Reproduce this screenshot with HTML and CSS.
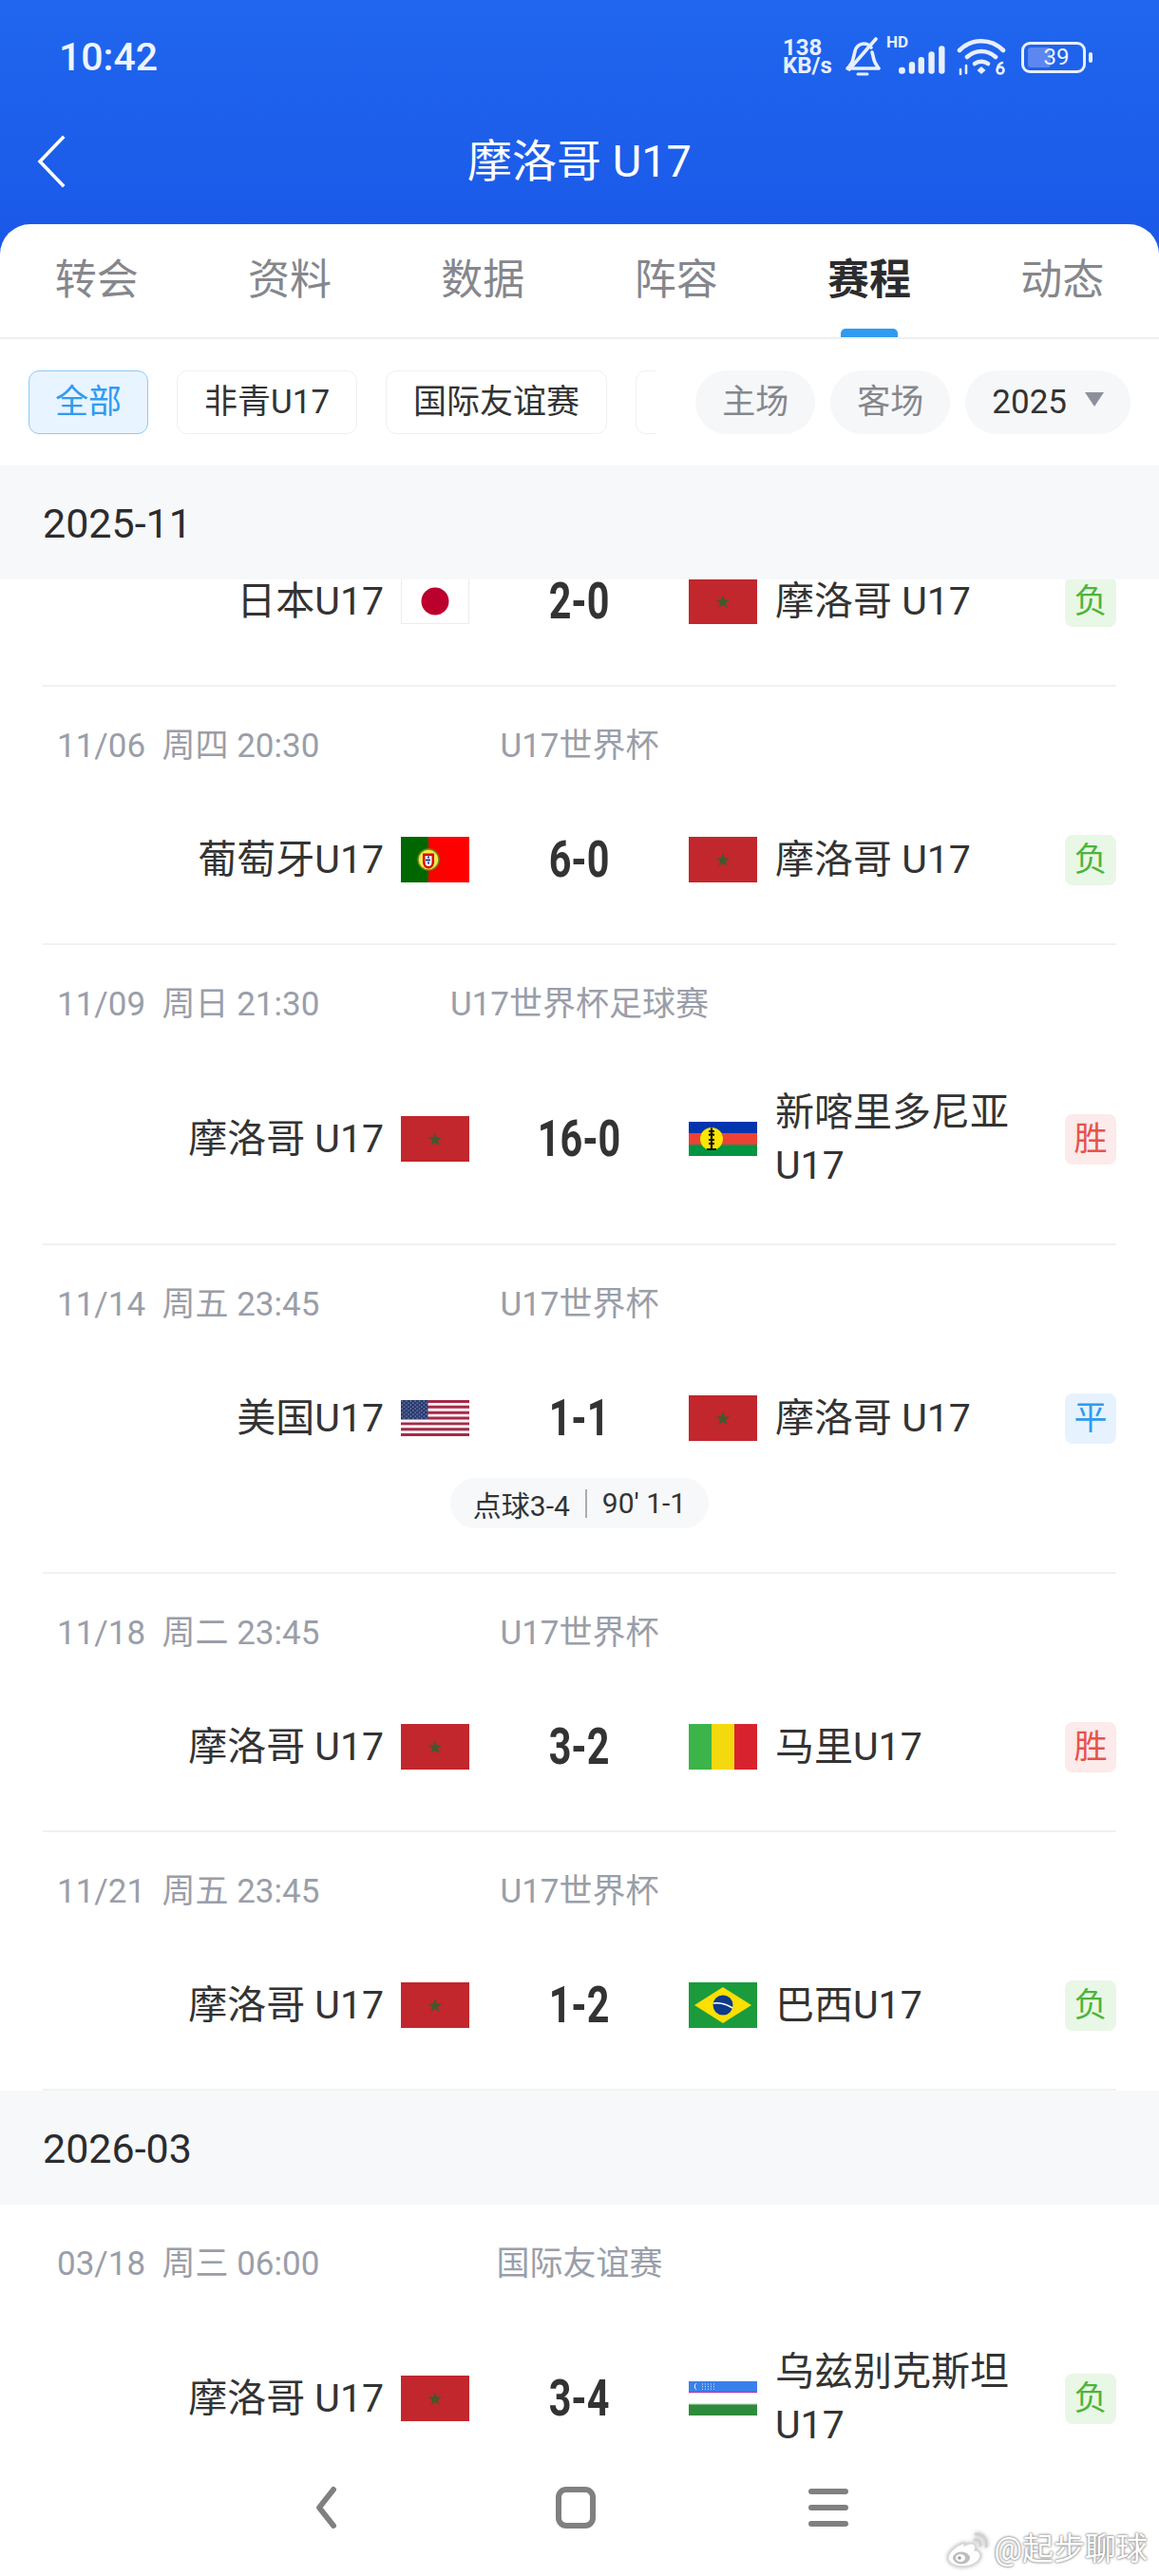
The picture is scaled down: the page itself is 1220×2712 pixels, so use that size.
FILE: index.html
```html
<!DOCTYPE html>
<html lang="zh-CN">
<head>
<meta charset="utf-8">
<title>摩洛哥 U17</title>
<link rel="stylesheet" href="styles.css">
</head>
<body>
<svg class="defs" width="0" height="0" aria-hidden="true">
  <defs>
    <symbol id="f-mar" viewBox="0 0 72 48">
      <rect width="72" height="48" fill="#c1272d"/>
      <path d="M36 17l1.8 5.4h5.6l-4.6 3.3 1.8 5.4-4.6-3.4-4.6 3.4 1.8-5.4-4.6-3.3h5.6z" fill="#3f5a2c"/>
    </symbol>
    <symbol id="f-jpn" viewBox="0 0 72 48">
      <rect x=".5" y=".5" width="71" height="47" fill="#fff" stroke="#ececec"/>
      <circle cx="36" cy="24" r="14.5" fill="#bc002d"/>
    </symbol>
    <symbol id="f-por" viewBox="0 0 72 48">
      <rect width="72" height="48" fill="#f00"/>
      <rect width="29" height="48" fill="#060"/>
      <circle cx="29" cy="24" r="11" fill="#f3e84a" stroke="#6f8a1c" stroke-width="1.4"/>
      <path d="M23 17.5h12v9a6 7 0 0 1-12 0z" fill="#d00"/>
      <path d="M25.5 20h7v6.5a3.5 4.5 0 0 1-7 0z" fill="#fff"/>
      <path d="M29 20.5v9M26 24.5h6" stroke="#1a3f9c" stroke-width="2" stroke-dasharray="2 1"/>
    </symbol>
    <symbol id="f-ncl" viewBox="0 0 72 36">
      <rect width="72" height="12" fill="#0035ad"/>
      <rect y="12" width="72" height="12" fill="#ed4135"/>
      <rect y="24" width="72" height="12" fill="#009543"/>
      <circle cx="24" cy="18" r="12" fill="#fae600"/>
      <path d="M24 6.5v22M21 10h6M21 14l3-1 3 1M21 19h6M21 23h6M19 29h10" stroke="#111" stroke-width="2.2" fill="none"/>
    </symbol>
    <symbol id="f-usa" viewBox="0 0 72 38">
      <defs>
        <pattern id="usa-stars" width="4.6" height="4" patternUnits="userSpaceOnUse">
          <circle cx="1.2" cy="1" r=".6" fill="#dfe6f5"/>
          <circle cx="3.5" cy="3" r=".6" fill="#dfe6f5"/>
        </pattern>
      </defs>
      <rect width="72" height="38" fill="#fbf3f6"/>
      <path d="M0 1.5h72M0 7.3h72M0 13.2h72M0 19h72M0 24.9h72M0 30.7h72M0 36.5h72" stroke="#a42a48" stroke-width="2.9"/>
      <rect width="28.5" height="20" fill="#27396f"/>
      <rect width="28.5" height="20" fill="url(#usa-stars)"/>
    </symbol>
    <symbol id="f-mli" viewBox="0 0 72 48">
      <rect width="24" height="48" fill="#3cb44a"/>
      <rect x="24" width="24" height="48" fill="#f5d90f"/>
      <rect x="48" width="24" height="48" fill="#d8232f"/>
    </symbol>
    <symbol id="f-bra" viewBox="0 0 72 48">
      <rect width="72" height="48" fill="#1c9b3d"/>
      <path d="M36 5l30 19-30 19L6 24z" fill="#fddf00"/>
      <circle cx="36" cy="24" r="10.5" fill="#0d3a8a"/>
      <path d="M26 22c7-1 14 1 20 5" stroke="#fff" stroke-width="1.6" fill="none"/>
    </symbol>
    <symbol id="f-uzb" viewBox="0 0 72 36">
      <rect width="72" height="11" fill="#3a80ea"/>
      <rect y="11" width="72" height="1.4" fill="#a23bb5"/>
      <rect y="12.4" width="72" height="11" fill="#fff"/>
      <rect y="23.4" width="72" height="1" fill="#b9d9b9"/>
      <rect y="24.4" width="72" height="11.6" fill="#2f8b3c"/>
      <path d="M8 2.2a4 4 0 0 0 0 6.6" stroke="#fff" stroke-width="1" fill="none"/>
      <path d="M14 3h13M14 5.6h13M14 8.2h13" stroke="#d5e4fb" stroke-width="1" stroke-dasharray="1 2"/>
    </symbol>
  </defs>
</svg>

<div class="app">
  <header class="top">
    <div class="status">
      <span class="clock">10:42</span>
      <div class="status-icons">
        <div class="speed">138<br>KB/s</div>
        <svg class="i-bell" viewBox="0 0 38 42" fill="none" stroke="#e8effd" stroke-width="3.6" stroke-linecap="round" stroke-linejoin="round">
          <path d="M3 33c3-3 5-5 6-10l2-8c1-5 5-8 9-8 3 0 6 1 8 4"/>
          <path d="M29 16l2 8c1 4 3 6 5 9H8"/>
          <path d="M33 2L5 34"/>
          <path d="M14 39h10" stroke-width="3"/>
        </svg>
        <div class="signal">
          <span class="hd">HD</span>
          <svg class="i-bars" viewBox="0 0 50 30" fill="#e8effd">
            <rect x="0" y="23" width="7" height="7" rx="3"/>
            <rect x="11" y="17" width="6.5" height="13" rx="3"/>
            <rect x="21" y="12" width="6.5" height="18" rx="3"/>
            <rect x="32" y="6" width="6.5" height="24" rx="3"/>
            <rect x="43" y="0" width="6.5" height="30" rx="3"/>
          </svg>
        </div>
        <svg class="i-wifi" viewBox="0 0 52 40" fill="none" stroke="#e8effd" stroke-width="4.6" stroke-linecap="round">
          <path d="M3 13c13-13 33-13 46 0"/>
          <path d="M11 20c9-8 21-8 30 0"/>
          <path d="M19 27c4-3 10-3 14 0"/>
          <path d="M26 30l4.5 4-4.5 4-4.5-4z" fill="#e8effd" stroke="none"/>
          <path d="M4 33v5M10 29v8" stroke-width="2.6"/>
          <circle cx="46" cy="34" r="3.5" stroke-width="2.6"/>
          <path d="M43 33c0-4 2-6 5-7" stroke-width="2.6"/>
        </svg>
        <div class="battery">
          <div class="battery-body">
            <span class="battery-fill"></span>
            <span class="battery-num">39</span>
          </div>
          <span class="battery-nub"></span>
        </div>
      </div>
    </div>
    <div class="titlebar">
      <svg class="i-back" viewBox="0 0 32 56" fill="none" stroke="#fff" stroke-width="3.6" stroke-linecap="square">
        <path d="M28 3L4 28l24 25"/>
      </svg>
      <h1 class="title">摩洛哥 U17</h1>
    </div>
  </header>

  <main class="sheet">
    <nav class="tabs">
      <a class="tab">转会</a>
      <a class="tab">资料</a>
      <a class="tab">数据</a>
      <a class="tab">阵容</a>
      <a class="tab tab-active">赛程</a>
      <a class="tab">动态</a>
    </nav>

    <div class="filters">
      <div class="chips">
        <span class="chip chip-on">全部</span>
        <span class="chip">非青U17</span>
        <span class="chip">国际友谊赛</span>
        <span class="chip chip-cut"></span>
      </div>
      <div class="pills">
        <span class="pill">主场</span>
        <span class="pill">客场</span>
        <span class="pill pill-year">2025<i class="caret"></i></span>
      </div>
    </div>

    <h2 class="month">2025-11</h2>
    <section class="list">
      <article class="game game-clipped">
        <div class="match">
          <div class="side home"><span class="name">日本U17</span><svg class="flag"><use href="#f-jpn"/></svg></div>
          <div class="score">2-0</div>
          <div class="side away"><svg class="flag"><use href="#f-mar"/></svg><span class="name">摩洛哥 U17</span></div>
          <span class="res res-lose">负</span>
        </div>
      </article>

      <article class="game">
        <div class="meta"><span class="date">11/06&nbsp; 周四 20:30</span><span class="league">U17世界杯</span></div>
        <div class="match">
          <div class="side home"><span class="name">葡萄牙U17</span><svg class="flag"><use href="#f-por"/></svg></div>
          <div class="score">6-0</div>
          <div class="side away"><svg class="flag"><use href="#f-mar"/></svg><span class="name">摩洛哥 U17</span></div>
          <span class="res res-lose">负</span>
        </div>
      </article>

      <article class="game">
        <div class="meta"><span class="date">11/09&nbsp; 周日 21:30</span><span class="league">U17世界杯足球赛</span></div>
        <div class="match">
          <div class="side home"><span class="name">摩洛哥 U17</span><svg class="flag"><use href="#f-mar"/></svg></div>
          <div class="score">16-0</div>
          <div class="side away"><svg class="flag flag-short" viewBox="0 0 72 36"><use href="#f-ncl"/></svg><span class="name">新喀里多尼亚 U17</span></div>
          <span class="res res-win">胜</span>
        </div>
      </article>

      <article class="game game-pens">
        <div class="meta"><span class="date">11/14&nbsp; 周五 23:45</span><span class="league">U17世界杯</span></div>
        <div class="match">
          <div class="side home"><span class="name">美国U17</span><svg class="flag flag-us" viewBox="0 0 72 38"><use href="#f-usa"/></svg></div>
          <div class="score">1-1</div>
          <div class="side away"><svg class="flag"><use href="#f-mar"/></svg><span class="name">摩洛哥 U17</span></div>
          <span class="res res-draw">平</span>
        </div>
        <div class="pens"><span class="pens-pill">点球3-4<i class="pens-sep"></i>90' 1-1</span></div>
      </article>

      <article class="game">
        <div class="meta"><span class="date">11/18&nbsp; 周二 23:45</span><span class="league">U17世界杯</span></div>
        <div class="match">
          <div class="side home"><span class="name">摩洛哥 U17</span><svg class="flag"><use href="#f-mar"/></svg></div>
          <div class="score">3-2</div>
          <div class="side away"><svg class="flag"><use href="#f-mli"/></svg><span class="name">马里U17</span></div>
          <span class="res res-win">胜</span>
        </div>
      </article>

      <article class="game">
        <div class="meta"><span class="date">11/21&nbsp; 周五 23:45</span><span class="league">U17世界杯</span></div>
        <div class="match">
          <div class="side home"><span class="name">摩洛哥 U17</span><svg class="flag"><use href="#f-mar"/></svg></div>
          <div class="score">1-2</div>
          <div class="side away"><svg class="flag"><use href="#f-bra"/></svg><span class="name">巴西U17</span></div>
          <span class="res res-lose">负</span>
        </div>
      </article>
    </section>

    <h2 class="month">2026-03</h2>
    <section class="list">
      <article class="game">
        <div class="meta"><span class="date">03/18&nbsp; 周三 06:00</span><span class="league">国际友谊赛</span></div>
        <div class="match">
          <div class="side home"><span class="name">摩洛哥 U17</span><svg class="flag"><use href="#f-mar"/></svg></div>
          <div class="score">3-4</div>
          <div class="side away"><svg class="flag flag-short" viewBox="0 0 72 36"><use href="#f-uzb"/></svg><span class="name">乌兹别克斯坦 U17</span></div>
          <span class="res res-lose">负</span>
        </div>
      </article>
    </section>
  </main>

  <footer class="sysnav">
    <svg class="nav-icon" viewBox="0 0 60 60" fill="none" stroke="#808080" stroke-width="6" stroke-linecap="round" stroke-linejoin="round">
      <path d="M41 11L26 30l15 19"/>
    </svg>
    <svg class="nav-icon" viewBox="0 0 60 60" fill="none" stroke="#808080" stroke-width="6" stroke-linejoin="round">
      <rect x="12" y="11" width="36" height="38" rx="8"/>
    </svg>
    <svg class="nav-icon" viewBox="0 0 60 60" fill="none" stroke="#808080" stroke-width="6" stroke-linecap="round">
      <path d="M12 13h36M12 30h36M12 47h36"/>
    </svg>
  </footer>

  <div class="watermark">
    <svg class="wb" viewBox="0 0 44 40" fill="none" stroke-linecap="round">
      <path d="M19 13C10 16 2 23 2 29c0 5 7 9 15 9 10 0 19-5 19-12 0-3-3-5-6-5 2-5-1-8-5-7-2 .5-4 1-6 2z" fill="#fff" stroke="#d8d8d8" stroke-width="1.5"/>
      <ellipse cx="16" cy="29" rx="9" ry="6.5" fill="#bdbdbd"/>
      <ellipse cx="15" cy="29" rx="5" ry="4" fill="#fff"/>
      <circle cx="14" cy="29" r="1.8" fill="#9c9c9c"/>
      <path d="M30 10c4-1 7 2 6 6M31 4c7-1 13 5 11 13" stroke="#d0d0d0" stroke-width="2.6"/>
    </svg>
    <span class="wm-text">@起步聊球</span>
  </div>
</div>
</body>
</html>
```

FILE: styles.css
```css
* { box-sizing: border-box; }

html, body {
  margin: 0;
  padding: 0;
  width: 1220px;
  height: 2712px;
  overflow: hidden;
  background: #fff;
}

body {
  font-family: Roboto, "Noto Sans CJK SC", sans-serif;
  color: #333;
}

.defs { position: absolute; }

.app {
  position: relative;
  width: 1220px;
  height: 2712px;
  overflow: hidden;
  background: linear-gradient(#2066ee, #1a58e8) no-repeat 0 0 / 100% 270px;
}

/* header */
.top { height: 236px; color: #fff; }

.status {
  height: 120px;
  display: flex;
  align-items: center;
  justify-content: space-between;
  padding: 0 70px 0 62px;
}

.clock { font-size: 41px; font-weight: 500; color: #f0f4ff; }

.status-icons { display: flex; align-items: center; color: #e8effd; }

.speed {
  width: 62px;
  margin-right: 3px;
  font-size: 24px;
  font-weight: 700;
  line-height: 19px;
}

.i-bell { width: 38px; height: 42px; margin-right: 12px; }

.signal { position: relative; width: 56px; height: 36px; margin-right: 12px; }
.hd {
  position: absolute;
  left: -6px;
  top: -6px;
  font-size: 17px;
  line-height: 17px;
  font-weight: 700;
}
.i-bars { position: absolute; right: 0; bottom: 0; width: 49px; height: 30px; }

.i-wifi { width: 52px; height: 40px; margin-right: 16px; }

.battery { display: flex; align-items: center; gap: 3px; }
.battery-body {
  position: relative;
  width: 68px;
  height: 33px;
  border: 3px solid #e8effd;
  border-radius: 9px;
  display: flex;
  align-items: center;
  justify-content: center;
  padding-left: 6px;
}
.battery-fill {
  position: absolute;
  left: 4px;
  top: 3px;
  bottom: 3px;
  width: 24px;
  background: #5d87f0;
  border-radius: 3px;
}
.battery-num { position: relative; font-size: 24px; line-height: 1; color: #eef3ff; }
.battery-nub { width: 4px; height: 11px; border-radius: 2px; background: #e8effd; }

.titlebar {
  position: relative;
  height: 100px;
  display: flex;
  align-items: center;
  justify-content: center;
}
.i-back { position: absolute; left: 38px; top: 22px; width: 32px; height: 56px; }
.title { margin: 0; font-size: 47px; font-weight: 400; line-height: 60px; }

/* sheet */
.sheet {
  background: #fff;
  border-radius: 32px 32px 0 0;
  overflow: hidden;
}

.tabs {
  display: flex;
  height: 121px;
  border-bottom: 2px solid #eeeff1;
}
.tab {
  position: relative;
  flex: 1;
  text-align: center;
  padding-top: 28px;
  font-size: 44px;
  line-height: 62px;
  color: #85878c;
}
.tab-active { color: #2c2c2e; font-weight: 700; }
.tab-active::after {
  content: "";
  position: absolute;
  left: 50%;
  bottom: 0;
  width: 60px;
  height: 9px;
  margin-left: -30px;
  border-radius: 5px 5px 0 0;
  background: #2f9bf0;
}

.filters {
  display: flex;
  justify-content: space-between;
  height: 133px;
  padding: 33px 30px 0 30px;
}
.chips { display: flex; gap: 30px; width: 660px; overflow: hidden; height: 67px; }
.chip {
  flex: none;
  height: 67px;
  padding: 0 28px;
  border: 1px solid #eef0f2;
  border-radius: 11px;
  font-size: 35px;
  line-height: 65px;
  color: #333;
}
.chip-on {
  padding: 0 27px;
  background: #e8f4ff;
  border-color: #8ccaf6;
  color: #2f9bf0;
}
.chip-cut { width: 100px; }
.pills { display: flex; gap: 16px; }
.pill {
  height: 67px;
  padding: 0 28px;
  border-radius: 34px;
  background: #f6f7f9;
  font-size: 35px;
  line-height: 67px;
  color: #85878c;
}
.pill-year { display: flex; align-items: center; gap: 19px; color: #333; }
.caret {
  width: 0;
  height: 0;
  margin-top: -6px;
  border-left: 10px solid transparent;
  border-right: 10px solid transparent;
  border-top: 15px solid #8b919c;
}

.month {
  margin: 0;
  height: 120px;
  padding-left: 45px;
  background: #f7f8fa;
  font-size: 43px;
  font-weight: 400;
  line-height: 122px;
  color: #2c2c2e;
}

.list { overflow: hidden; }

.game {
  margin: 0 45px;
  padding-bottom: 28px;
  border-bottom: 2px solid #f0f1f3;
}
.game-clipped { margin-top: -37px; }
.game-pens { padding-bottom: 46px; }

.meta {
  display: grid;
  grid-template-columns: 1fr auto 1fr;
  align-items: center;
  height: 122px;
  padding: 0 15px 6px;
  font-size: 35px;
  color: #9a9ea9;
}
.date { white-space: nowrap; }
.league { grid-column: 2; grid-row: 1; white-space: nowrap; }

.match {
  display: flex;
  align-items: center;
  min-height: 120px;
  padding: 26px 0;
}
.side { display: flex; align-items: center; }
.home { width: 449px; justify-content: flex-end; gap: 18px; }
.away { flex: 1; gap: 19px; }
.name {
  font-size: 41px;
  line-height: 56px;
  color: #333;
}
.home .name { white-space: nowrap; }
.away .name { width: 290px; }

.flag { flex: none; display: block; width: 72px; height: 48px; }
.flag-short { height: 36px; }
.flag-us { height: 38px; }

.score {
  flex: none;
  width: 231px;
  text-align: center;
  font-family: Roboto, sans-serif;
  font-size: 53px;
  font-weight: 700;
  line-height: 56px;
  color: #333;
  transform: scaleX(.78);
}

.res {
  flex: none;
  width: 54px;
  height: 53px;
  border-radius: 8px;
  text-align: center;
  font-size: 35px;
  line-height: 53px;
}
.res-lose { background: #e9f7e6; color: #4bb53a; }
.res-win { background: #fdeaea; color: #e4544c; }
.res-draw { background: #e6f3fe; color: #2f9bf0; }

.pens { display: flex; justify-content: center; margin-top: 3px; }
.pens-pill {
  display: flex;
  align-items: center;
  height: 53px;
  padding: 0 24px;
  border-radius: 27px;
  background: #f7f8fa;
  font-size: 30px;
  color: #333;
}
.pens-sep {
  width: 2px;
  height: 30px;
  margin: 0 16px;
  background: #a8acb4;
}

/* system bar, over the list */
.sysnav {
  position: absolute;
  left: 0;
  right: 0;
  bottom: 0;
  height: 112px;
  padding: 10px 8px 0 0;
  display: flex;
  justify-content: center;
  align-items: flex-start;
  gap: 206px;
  background: #fff;
}
.nav-icon { width: 60px; height: 60px; }

.watermark {
  position: absolute;
  right: 12px;
  bottom: 8px;
  display: flex;
  align-items: center;
  gap: 6px;
}
.wb { width: 44px; height: 40px; filter: drop-shadow(0 0 2px #aaa); }
.wm-text {
  font-size: 33px;
  line-height: 38px;
  color: #fff;
  text-shadow: 0 0 3px #777, 0 0 2px #888;
}
```
